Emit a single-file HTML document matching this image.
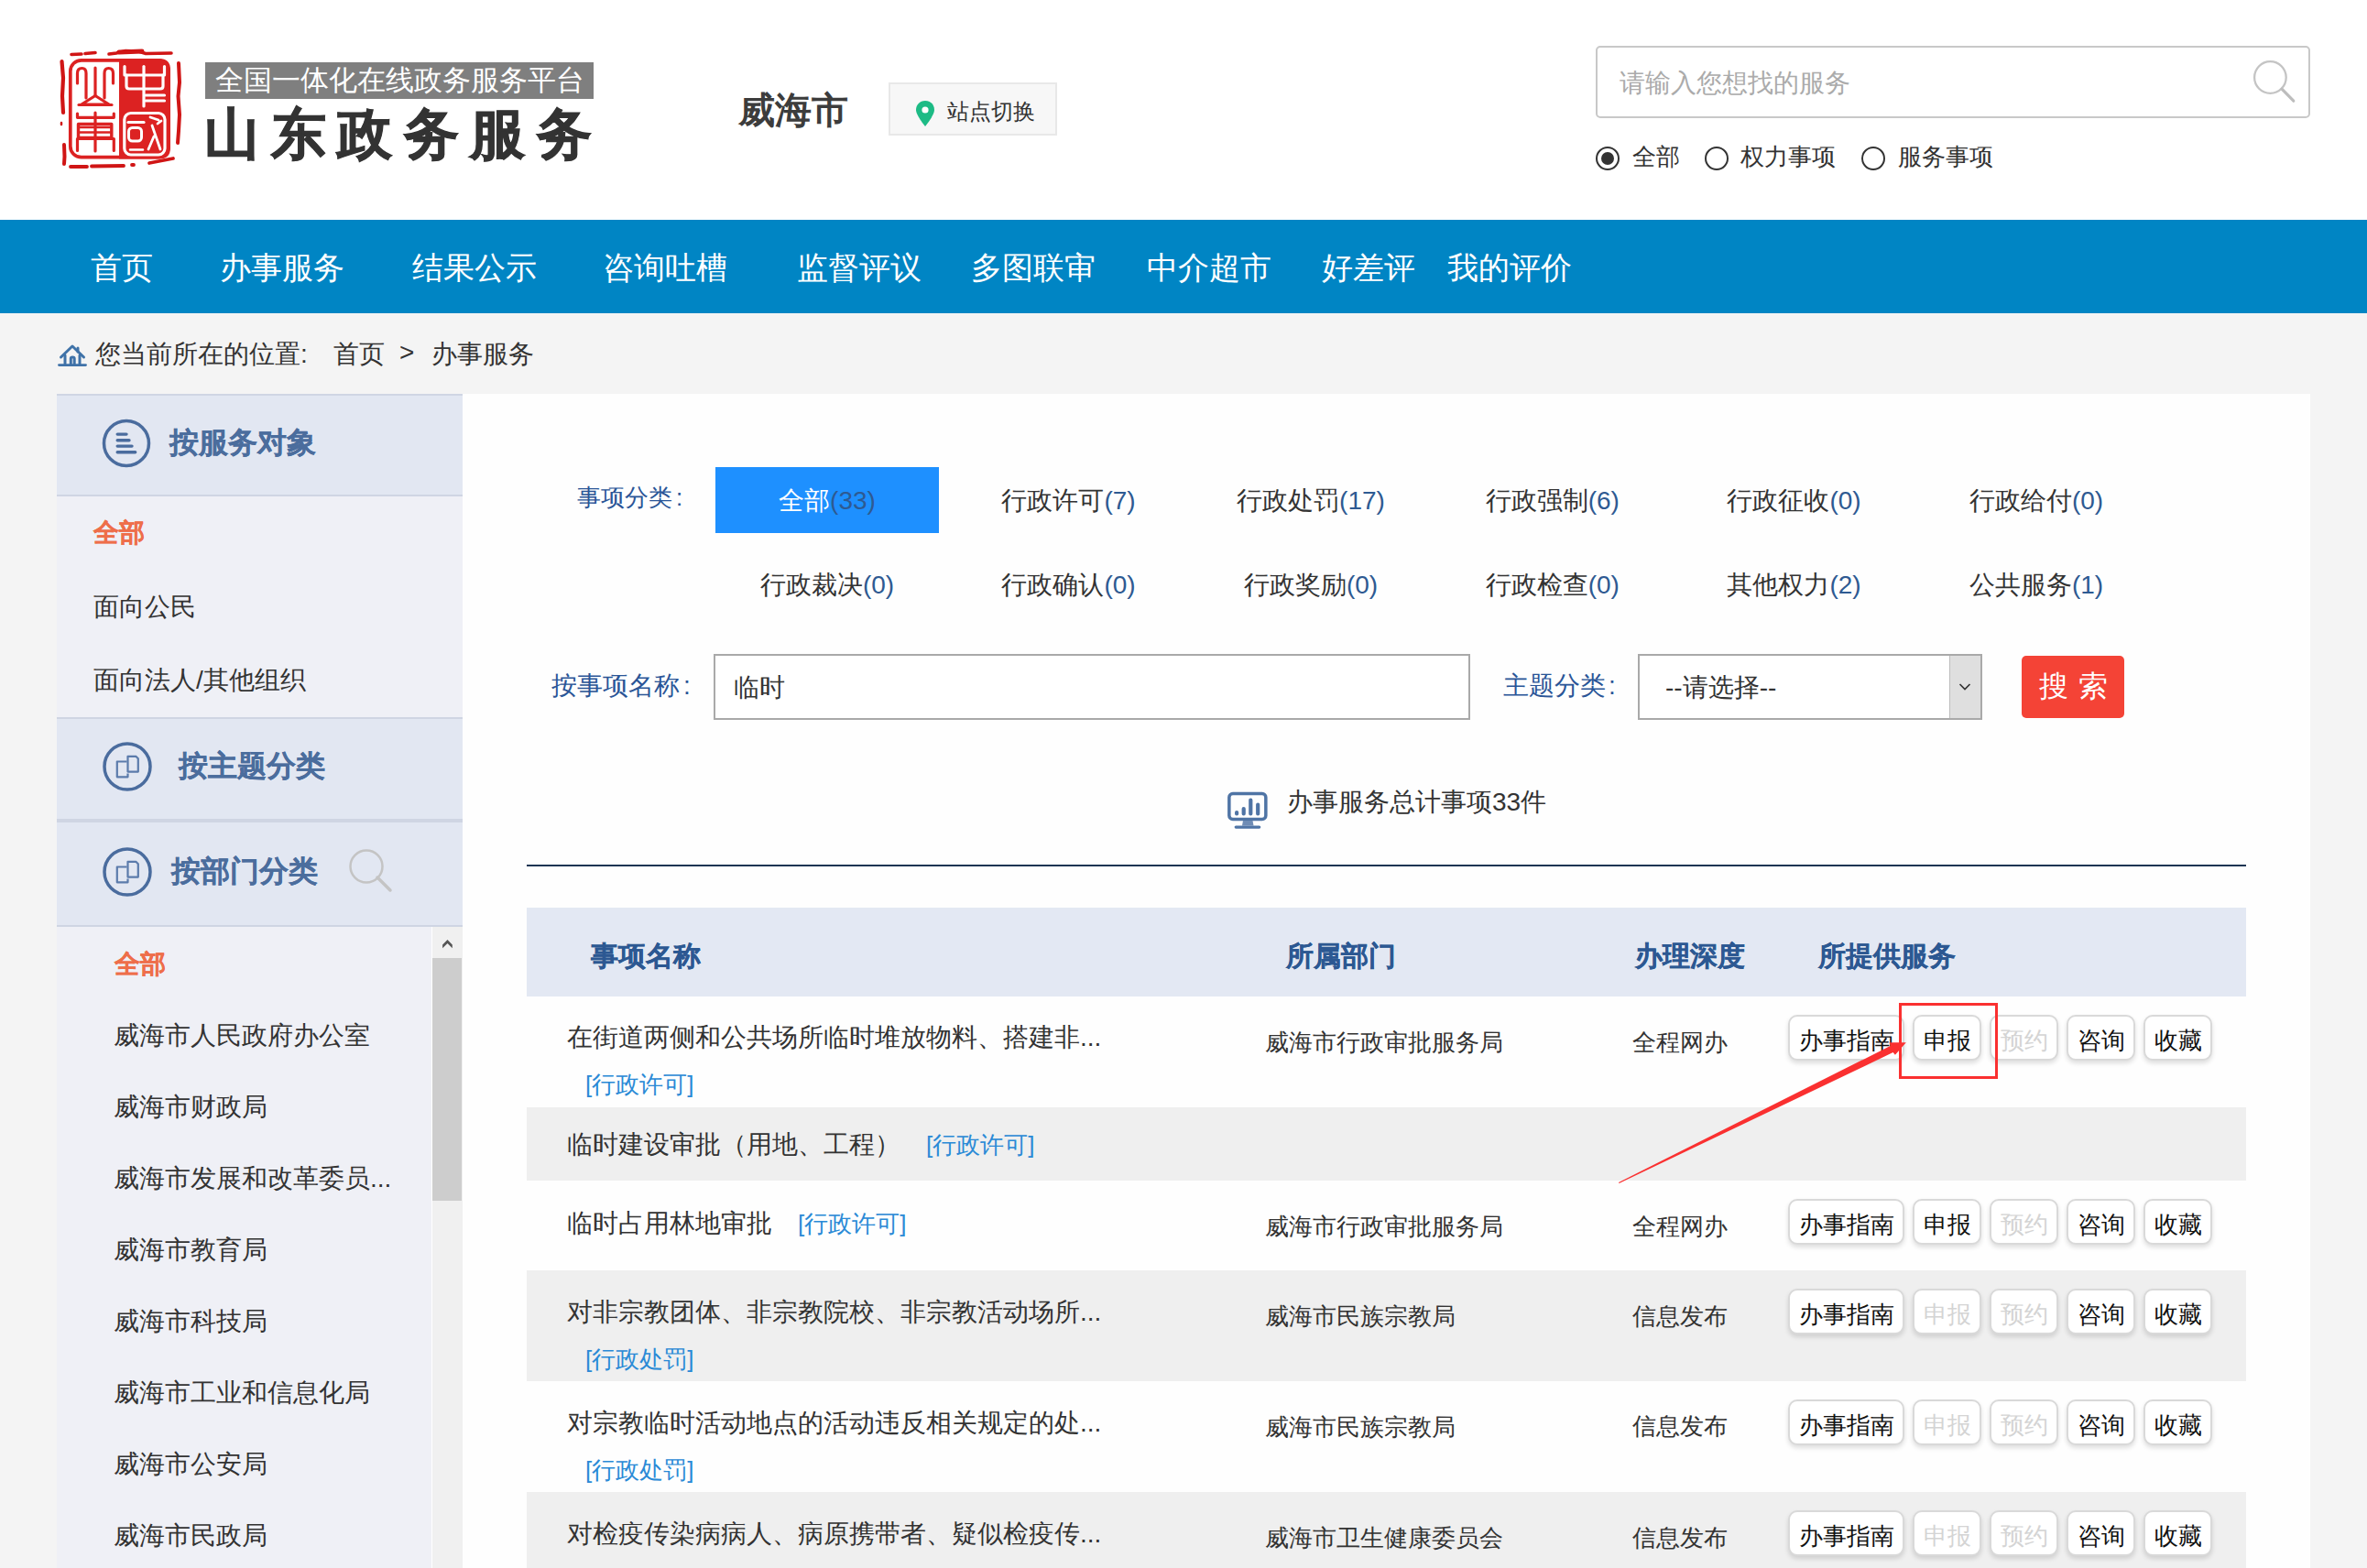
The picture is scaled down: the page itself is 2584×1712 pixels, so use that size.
<!DOCTYPE html>
<html><head><meta charset="utf-8">
<style>
*{margin:0;padding:0;box-sizing:border-box}
html,body{width:2584px;height:1712px;overflow:hidden}
body{position:relative;background:#f4f4f4;font-family:"Liberation Sans",sans-serif;color:#333}
.a{position:absolute;white-space:nowrap}
.t{position:absolute;white-space:nowrap;line-height:1}
#hdr{left:0;top:0;width:2584px;height:240px;background:#fff}
#nav{left:0;top:240px;width:2584px;height:102px;background:#0085c4}
#nav .t{color:#fff;font-size:34px;top:35px}
.sb{left:62px;width:443px}
.sbh{background:#e2e7f2}
.sbl{background:#cfd5e3}
.sbi{background:#eff0f6}
.hd{color:#4b6d9d;font-size:32px;font-weight:bold;-webkit-text-stroke:0.25px #4b6d9d}
.it{font-size:28px;color:#333}
.or{color:#ee6e4a;font-weight:bold;font-size:28px;-webkit-text-stroke:0.2px #ee6e4a}
#main{left:505px;top:430px;width:2017px;height:1282px;background:#fefefe}
.cat{font-size:28px;color:#333}
.cat b{font-weight:normal;color:#2e5a92}
.lbl{font-size:28px;color:#2a5597}
.th{font-size:30px;font-weight:bold;color:#2c5892;-webkit-text-stroke:0.25px #2c5892}
.ti{font-size:28px;color:#333}
.tg{font-size:26px;color:#2a8ad6}
.dp{font-size:26px;color:#333}
.btn{position:absolute;height:50px;background:#fff;border:2px solid #d9d9d9;border-radius:10px;box-shadow:0 3px 5px rgba(0,0,0,.13);font-size:26px;line-height:26px;padding-top:13px;text-align:center;color:#111}
.btn.d{color:#d4d4d4}
</style></head><body>
<div id="hdr" class="a">
  <svg class="a" style="left:55px;top:45px" width="150" height="145" viewBox="0 0 150 145">
    <g fill="none" stroke="#d01515" stroke-linecap="round">
      <path d="M23 14.5 L34 14 M38 13.5 L49 12.5 M64 14 L72 13 L82 10.5 L96 11 L104 13.5 L132 13" stroke-width="3.6"/>
      <path d="M75 12 L100 11" stroke-width="5"/>
      <path d="M12.5 22 L14 40 L13 60 L14 78" stroke-width="4.2"/>
      <path d="M12 89 L12 91" stroke-width="2.5"/>
      <path d="M15 113 L15.5 126 L15 134" stroke-width="4"/>
      <path d="M140 24 L141 45 L139.5 60 L141 80 L140 98 L139 111" stroke-width="4"/>
      <path d="M22 137 L40 137 M45 136.5 L80 136 M89 135 L91 135 M108 133 L134 128" stroke-width="3.8"/>
      <rect x="21.8" y="20.8" width="107.3" height="105.9" rx="12" stroke-width="3.7" stroke="#dc2222"/>
    </g>
    <path d="M75 19 L119 19 Q131 19 131 31 L131 116.6 Q131 128.6 119 128.6 L75 128.6 Z" fill="#dc2222"/>
    <g fill="none" stroke="#fff" stroke-width="3.2" stroke-linecap="round" stroke-linejoin="round">
      <path d="M81 27.5 L81 37 L124.5 37 L124.5 27.5"/>
      <path d="M83 37 L83 49 Q83 52 86 52 L120 52 Q123 52 123 49 L123 37"/>
      <path d="M102 27.5 L102 71"/>
      <path d="M104 59 L124.5 59 M104 65 L124.5 65"/>
      <rect x="80.8" y="78.5" width="44.2" height="45.5" rx="7"/>
      <path d="M85 88.5 L102 88.5"/>
      <rect x="85.5" y="94.5" width="14" height="14.5" rx="4" stroke-width="3"/>
      <path d="M87 118.5 L101 118.5" stroke-width="2.4"/>
      <path d="M109 83 L118 86 M111 92 L120 118 M107 118 L113 104 M117 90 L121 87" stroke-width="2.8"/>
    </g>
    <g fill="none" stroke="#dc2222" stroke-width="3.2" stroke-linecap="round" stroke-linejoin="round">
      <path d="M49 29 L49 59"/>
      <path d="M29.5 46 L29.5 35 Q29.5 29.5 34.5 29.5 Q39 29.5 39 35 L39 62"/>
      <path d="M68.5 46 L68.5 35 Q68.5 29.5 63.5 29.5 Q59 29.5 59 35 L59 62"/>
      <path d="M34 69 L49 59.5 L64 69 Z"/>
      <path d="M31 69.5 L67 69.5"/>
      <path d="M49 78 L49 120"/>
      <path d="M29.5 79 L29.5 83.3 L69.3 83.3 L69.3 79"/>
      <rect x="30.5" y="90.5" width="36.3" height="15" stroke-width="3.4"/>
      <path d="M32 94 L66 94 M32 99.5 L66 99.5" stroke-width="2.4"/>
      <path d="M29.5 119.5 L29.5 106.5 L69.3 106.5 L69.3 119.5"/>
    </g>
  </svg>
  <div class="a" style="left:224px;top:68px;width:424px;height:40px;background:#7f7f7f"></div>
  <div class="t" style="left:235px;top:71.5px;font-size:30.5px;color:#fff;letter-spacing:0px">全国一体化在线政务服务平台</div>
  <div class="t" style="left:223px;top:117px;font-size:60px;color:#333;font-weight:bold;letter-spacing:12.6px;-webkit-text-stroke:1px #333">山东政务服务</div>
  <div class="t" style="left:806px;top:100px;font-size:40px;color:#3c3c3c;font-weight:bold">威海市</div>
  <div class="a" style="left:970px;top:90px;width:184px;height:58px;background:#f7f7f7;border:2px solid #e8e8e8"></div>
  <svg class="a" style="left:999px;top:109px" width="22" height="30" viewBox="0 0 22 30"><path d="M11 1 C5 1 1 5.5 1 11 C1 17 11 29 11 29 C11 29 21 17 21 11 C21 5.5 17 1 11 1 Z" fill="#1dbb85"/><circle cx="11" cy="11" r="3.6" fill="#fff"/></svg>
  <div class="t" style="left:1034px;top:110px;font-size:24px;color:#333">站点切换</div>
  <div class="a" style="left:1742px;top:50px;width:780px;height:79px;border:2px solid #c8c8c8;border-radius:5px;background:#fff"></div>
  <div class="t" style="left:1768px;top:77px;font-size:28px;color:#ababab">请输入您想找的服务</div>
  <svg class="a" style="left:2455px;top:62px" width="54" height="54" viewBox="0 0 54 54"><circle cx="23.4" cy="22.5" r="17.3" fill="none" stroke="#c4c4c4" stroke-width="2.3"/><path d="M36 35.2 L48.8 48.2" stroke="#bdbdbd" stroke-width="3.2" stroke-linecap="round"/></svg>
  <svg class="a" style="left:1741px;top:159px" width="28" height="28" viewBox="0 0 28 28"><circle cx="14" cy="14" r="12" fill="#fff" stroke="#333" stroke-width="2"/><circle cx="14" cy="14" r="7" fill="#333"/></svg>
  <div class="t" style="left:1782px;top:158px;font-size:26px;color:#333">全部</div>
  <svg class="a" style="left:1860px;top:159px" width="28" height="28" viewBox="0 0 28 28"><circle cx="14" cy="14" r="12" fill="#fff" stroke="#333" stroke-width="2"/></svg>
  <div class="t" style="left:1900px;top:158px;font-size:26px;color:#333">权力事项</div>
  <svg class="a" style="left:2031px;top:159px" width="28" height="28" viewBox="0 0 28 28"><circle cx="14" cy="14" r="12" fill="#fff" stroke="#333" stroke-width="2"/></svg>
  <div class="t" style="left:2072px;top:158px;font-size:26px;color:#333">服务事项</div>
</div>
<div id="nav" class="a">
  <div class="t" style="left:99px">首页</div>
  <div class="t" style="left:240px">办事服务</div>
  <div class="t" style="left:450px">结果公示</div>
  <div class="t" style="left:658px">咨询吐槽</div>
  <div class="t" style="left:870px">监督评议</div>
  <div class="t" style="left:1060px">多图联审</div>
  <div class="t" style="left:1252px">中介超市</div>
  <div class="t" style="left:1443px">好差评</div>
  <div class="t" style="left:1580px">我的评价</div>
</div>
<!-- BREADCRUMB -->
<svg class="a" style="left:62px;top:374px" width="34" height="28" viewBox="0 0 34 28"><g fill="none" stroke="#3f72a8" stroke-width="3" stroke-linecap="round" stroke-linejoin="round"><path d="M4.5 16 L17 4 L29.5 16"/><path d="M23 6 L23 10"/><path d="M9 14 L9 23.5 M25 14 L25 23.5"/><path d="M15.3 24 L15.3 17.5 Q15.3 16 17.2 16 Q19.2 16 19.2 17.5 L19.2 24"/></g><path d="M2.5 24.6 L31.5 24.6" stroke="#3f72a8" stroke-width="2.8" stroke-linecap="round"/></svg>
<div class="t" style="left:104px;top:373px;font-size:28px;color:#333">您当前所在的位置:</div>
<div class="t" style="left:364px;top:373px;font-size:28px;color:#333">首页</div>
<div class="t" style="left:436px;top:371px;font-size:28px;color:#333">&gt;</div>
<div class="t" style="left:471px;top:373px;font-size:28px;color:#333">办事服务</div>
<!-- SIDEBAR -->
<div class="a sb sbl" style="top:430px;height:2px"></div>
<div class="a sb sbh" style="top:432px;height:108px"></div>
<div class="a sb sbl" style="top:540px;height:2px"></div>
<div class="a sb sbi" style="top:542px;height:241px"></div>
<div class="a sb sbl" style="top:783px;height:2px"></div>
<div class="a sb sbh" style="top:785px;height:109px"></div>
<div class="a sb sbl" style="top:894px;height:4px"></div>
<div class="a sb sbh" style="top:898px;height:112px"></div>
<div class="a sb sbl" style="top:1010px;height:2px"></div>
<div class="a sb sbi" style="top:1012px;height:700px"></div>
<svg class="a" style="left:110px;top:456px" width="56" height="56" viewBox="0 0 56 56"><circle cx="28" cy="28" r="24.5" fill="none" stroke="#4a6c9e" stroke-width="3.5"/><path d="M18.2 18.1 L28 18.1 M18.2 24.7 L31 24.7 M18.2 31.1 L34 31.1 M18.2 37.7 L37.7 37.7" stroke="#4a6c9e" stroke-width="3.4" stroke-linecap="round"/></svg>
<div class="t hd" style="left:185px;top:467px">按服务对象</div>
<div class="t or" style="left:102px;top:568px">全部</div>
<div class="t it" style="left:102px;top:649px">面向公民</div>
<div class="t it" style="left:102px;top:729px">面向法人/其他组织</div>
<svg class="a" style="left:111px;top:809px" width="56" height="56" viewBox="0 0 56 56"><circle cx="28" cy="28" r="25" fill="none" stroke="#4a6c9e" stroke-width="3.5"/><g fill="none" stroke="#5b7bab" stroke-width="2.2" stroke-linejoin="round"><path d="M27.5 22.5 L16.8 22.5 L16.8 39.3 L28.5 39.3 L28.5 35.5"/><path d="M28.5 16.8 L37.3 16.8 L39.8 19.3 L39.8 33.6 L28.5 33.6 Z"/></g></svg>
<div class="t hd" style="left:195px;top:820px">按主题分类</div>
<svg class="a" style="left:111px;top:924px" width="56" height="56" viewBox="0 0 56 56"><circle cx="28" cy="28" r="25" fill="none" stroke="#4a6c9e" stroke-width="3.5"/><g fill="none" stroke="#5b7bab" stroke-width="2.2" stroke-linejoin="round"><path d="M27.5 22.5 L16.8 22.5 L16.8 39.3 L28.5 39.3 L28.5 35.5"/><path d="M28.5 16.8 L37.3 16.8 L39.8 19.3 L39.8 33.6 L28.5 33.6 Z"/></g></svg>
<div class="t hd" style="left:187px;top:935px">按部门分类</div>
<svg class="a" style="left:378px;top:925px" width="54" height="52" viewBox="0 0 54 52"><circle cx="22" cy="21" r="17.5" fill="none" stroke="#c4c4c4" stroke-width="2.5"/><path d="M34 33 L48 47" stroke="#c4c4c4" stroke-width="3.5" stroke-linecap="round"/></svg>
<div class="t or" style="left:125px;top:1039px">全部</div>
<div class="t it" style="left:124px;top:1117px">威海市人民政府办公室</div>
<div class="t it" style="left:124px;top:1195px">威海市财政局</div>
<div class="t it" style="left:124px;top:1273px">威海市发展和改革委员...</div>
<div class="t it" style="left:124px;top:1351px">威海市教育局</div>
<div class="t it" style="left:124px;top:1429px">威海市科技局</div>
<div class="t it" style="left:124px;top:1507px">威海市工业和信息化局</div>
<div class="t it" style="left:124px;top:1585px">威海市公安局</div>
<div class="t it" style="left:124px;top:1663px">威海市民政局</div>
<div class="a" style="left:471px;top:1012px;width:34px;height:700px;background:#f0f0f0;border-left:1px solid #fff"></div>
<svg class="a" style="left:480px;top:1020px" width="18" height="20" viewBox="0 0 18 20"><path d="M3.1 11.4 L8.5 6 L13.8 11.4 L13.8 15.2 L8.5 9.9 L3.1 15.2 Z" fill="#555"/></svg>
<div class="a" style="left:472px;top:1046px;width:32px;height:265px;background:#cdcdcd"></div>
<div id="main" class="a"></div>
<div class="t lbl" style="left:630px;top:530px;font-size:26px">事项分类<span style="margin-left:4px">:</span></div>
<div class="a" style="left:781px;top:510px;width:244px;height:72px;background:#1e90ff"></div>
<div class="t cat" style="left:703px;width:400px;text-align:center;top:533px"><span style="color:#fff">全部</span><b>(33)</b></div>
<div class="t cat" style="left:966.5999999999999px;width:400px;text-align:center;top:533px"><span style="color:#333">行政许可</span><b>(7)</b></div>
<div class="t cat" style="left:1231px;width:400px;text-align:center;top:533px"><span style="color:#333">行政处罚</span><b>(17)</b></div>
<div class="t cat" style="left:1494.8px;width:400px;text-align:center;top:533px"><span style="color:#333">行政强制</span><b>(6)</b></div>
<div class="t cat" style="left:1758.6px;width:400px;text-align:center;top:533px"><span style="color:#333">行政征收</span><b>(0)</b></div>
<div class="t cat" style="left:2023px;width:400px;text-align:center;top:533px"><span style="color:#333">行政给付</span><b>(0)</b></div>
<div class="t cat" style="left:703px;width:400px;text-align:center;top:624.5px"><span style="color:#333">行政裁决</span><b>(0)</b></div>
<div class="t cat" style="left:966.5999999999999px;width:400px;text-align:center;top:624.5px"><span style="color:#333">行政确认</span><b>(0)</b></div>
<div class="t cat" style="left:1231px;width:400px;text-align:center;top:624.5px"><span style="color:#333">行政奖励</span><b>(0)</b></div>
<div class="t cat" style="left:1494.8px;width:400px;text-align:center;top:624.5px"><span style="color:#333">行政检查</span><b>(0)</b></div>
<div class="t cat" style="left:1758.6px;width:400px;text-align:center;top:624.5px"><span style="color:#333">其他权力</span><b>(2)</b></div>
<div class="t cat" style="left:2023px;width:400px;text-align:center;top:624.5px"><span style="color:#333">公共服务</span><b>(1)</b></div>
<div class="t lbl" style="left:602px;top:735px">按事项名称<span style="margin-left:4px">:</span></div>
<div class="a" style="left:779px;top:714px;width:826px;height:72px;border:2px solid #a9a9a9;background:#fff"></div>
<div class="t" style="left:801px;top:736.5px;font-size:28px;color:#333">临时</div>
<div class="t lbl" style="left:1641px;top:735px">主题分类<span style="margin-left:3px">:</span></div>
<div class="a" style="left:1788px;top:714px;width:376px;height:72px;border:2px solid #a9a9a9;background:#fff"></div>
<div class="a" style="left:2128px;top:716px;width:34px;height:68px;background:#dfdfdf;border-left:1px solid #bdbdbd"></div>
<svg class="a" style="left:2138px;top:745px" width="16" height="10" viewBox="0 0 16 10"><path d="M1.5 2 L7 7.5 L12.5 2" fill="none" stroke="#333" stroke-width="1.7"/></svg>
<div class="t" style="left:1818px;top:737px;font-size:28px;color:#333">--请选择--</div>
<div class="a" style="left:2207px;top:716px;width:112px;height:68px;background:#f44336;border-radius:5px"></div>
<div class="t" style="left:2226px;top:733px;font-size:32px;color:#fff;word-spacing:2px">搜 索</div>
<svg class="a" style="left:1338px;top:862px" width="48" height="46" viewBox="0 0 48 46"><rect x="3.85" y="4.5" width="40" height="28" rx="4" fill="none" stroke="#4f74a5" stroke-width="3.5"/><g stroke="#4f74a5" stroke-width="4.2" stroke-linecap="round"><path d="M12.1 25 L12.1 26.5 M19.7 21 L19.7 26.5 M27.3 11.6 L27.3 26.5 M35.2 16.6 L35.2 26.5"/></g><path d="M19 34 L29.5 34 L30.5 39.5 L18 39.5 Z" fill="#6f8cb5"/><path d="M11.2 41.1 L36.7 41.1" stroke="#4f74a5" stroke-width="3.2" stroke-linecap="round"/></svg>
<div class="t" style="left:1405px;top:862px;font-size:28px;color:#333">办事服务总计事项33件</div>
<div class="a" style="left:575px;top:944px;width:1877px;height:2px;background:#1c3553"></div>
<div class="a" style="left:575px;top:991px;width:1877px;height:97px;background:#e3e8f3"></div>
<div class="t th" style="left:645px;top:1029px">事项名称</div>
<div class="t th" style="left:1404px;top:1029px">所属部门</div>
<div class="t th" style="left:1785px;top:1029px">办理深度</div>
<div class="t th" style="left:1985px;top:1029px">所提供服务</div>
<div class="a" style="left:575px;top:1209px;width:1877px;height:80px;background:#efefef"></div>
<div class="a" style="left:575px;top:1387px;width:1877px;height:121px;background:#efefef"></div>
<div class="a" style="left:575px;top:1629px;width:1877px;height:83px;background:#efefef"></div>
<div class="t ti" style="left:619px;top:1119px">在街道两侧和公共场所临时堆放物料、搭建非...</div>
<div class="t tg" style="left:639px;top:1171px">[行政许可]</div>
<div class="t dp" style="left:1381px;top:1125px">威海市行政审批服务局</div>
<div class="t dp" style="left:1782px;top:1125px">全程网办</div>
<div class="btn" style="left:1952px;top:1108px;width:127px">办事指南</div>
<div class="btn" style="left:2088px;top:1108px;width:75px">申报</div>
<div class="btn d" style="left:2172px;top:1108px;width:75px">预约</div>
<div class="btn" style="left:2256px;top:1108px;width:75px">咨询</div>
<div class="btn" style="left:2340px;top:1108px;width:75px">收藏</div>
<div class="t ti" style="left:619px;top:1236px">临时建设审批（用地、工程）</div>
<div class="t tg" style="left:1011px;top:1237px">[行政许可]</div>
<div class="t ti" style="left:619px;top:1322px">临时占用林地审批</div>
<div class="t tg" style="left:871px;top:1323px">[行政许可]</div>
<div class="t dp" style="left:1381px;top:1326px">威海市行政审批服务局</div>
<div class="t dp" style="left:1782px;top:1325.5px">全程网办</div>
<div class="btn" style="left:1952px;top:1309px;width:127px">办事指南</div>
<div class="btn" style="left:2088px;top:1309px;width:75px">申报</div>
<div class="btn d" style="left:2172px;top:1309px;width:75px">预约</div>
<div class="btn" style="left:2256px;top:1309px;width:75px">咨询</div>
<div class="btn" style="left:2340px;top:1309px;width:75px">收藏</div>
<div class="t ti" style="left:619px;top:1419px">对非宗教团体、非宗教院校、非宗教活动场所...</div>
<div class="t tg" style="left:639px;top:1471px">[行政处罚]</div>
<div class="t dp" style="left:1381px;top:1424px">威海市民族宗教局</div>
<div class="t dp" style="left:1782px;top:1423.5px">信息发布</div>
<div class="btn" style="left:1952px;top:1407px;width:127px">办事指南</div>
<div class="btn d" style="left:2088px;top:1407px;width:75px">申报</div>
<div class="btn d" style="left:2172px;top:1407px;width:75px">预约</div>
<div class="btn" style="left:2256px;top:1407px;width:75px">咨询</div>
<div class="btn" style="left:2340px;top:1407px;width:75px">收藏</div>
<div class="t ti" style="left:619px;top:1540px">对宗教临时活动地点的活动违反相关规定的处...</div>
<div class="t tg" style="left:639px;top:1592px">[行政处罚]</div>
<div class="t dp" style="left:1381px;top:1545px">威海市民族宗教局</div>
<div class="t dp" style="left:1782px;top:1544px">信息发布</div>
<div class="btn" style="left:1952px;top:1528px;width:127px">办事指南</div>
<div class="btn d" style="left:2088px;top:1528px;width:75px">申报</div>
<div class="btn d" style="left:2172px;top:1528px;width:75px">预约</div>
<div class="btn" style="left:2256px;top:1528px;width:75px">咨询</div>
<div class="btn" style="left:2340px;top:1528px;width:75px">收藏</div>
<div class="t ti" style="left:619px;top:1661px">对检疫传染病病人、病原携带者、疑似检疫传...</div>
<div class="t tg" style="left:639px;top:1714px">[行政处罚]</div>
<div class="t dp" style="left:1381px;top:1666px">威海市卫生健康委员会</div>
<div class="t dp" style="left:1782px;top:1665.5px">信息发布</div>
<div class="btn" style="left:1952px;top:1649px;width:127px">办事指南</div>
<div class="btn d" style="left:2088px;top:1649px;width:75px">申报</div>
<div class="btn d" style="left:2172px;top:1649px;width:75px">预约</div>
<div class="btn" style="left:2256px;top:1649px;width:75px">咨询</div>
<div class="btn" style="left:2340px;top:1649px;width:75px">收藏</div>
<div class="a" style="left:2073px;top:1095px;width:108px;height:83px;border:3px solid #fa3030"></div>
<svg class="a" style="left:0;top:0" width="2584" height="1712" viewBox="0 0 2584 1712"><path d="M1767 1291 L2064 1141.8 L2062.4 1138.2 L2080.8 1138.2 L2068.9 1151.8 L2066.6 1149.1 L1767.6 1292 Z" fill="#fa3030"/></svg>

</body></html>
